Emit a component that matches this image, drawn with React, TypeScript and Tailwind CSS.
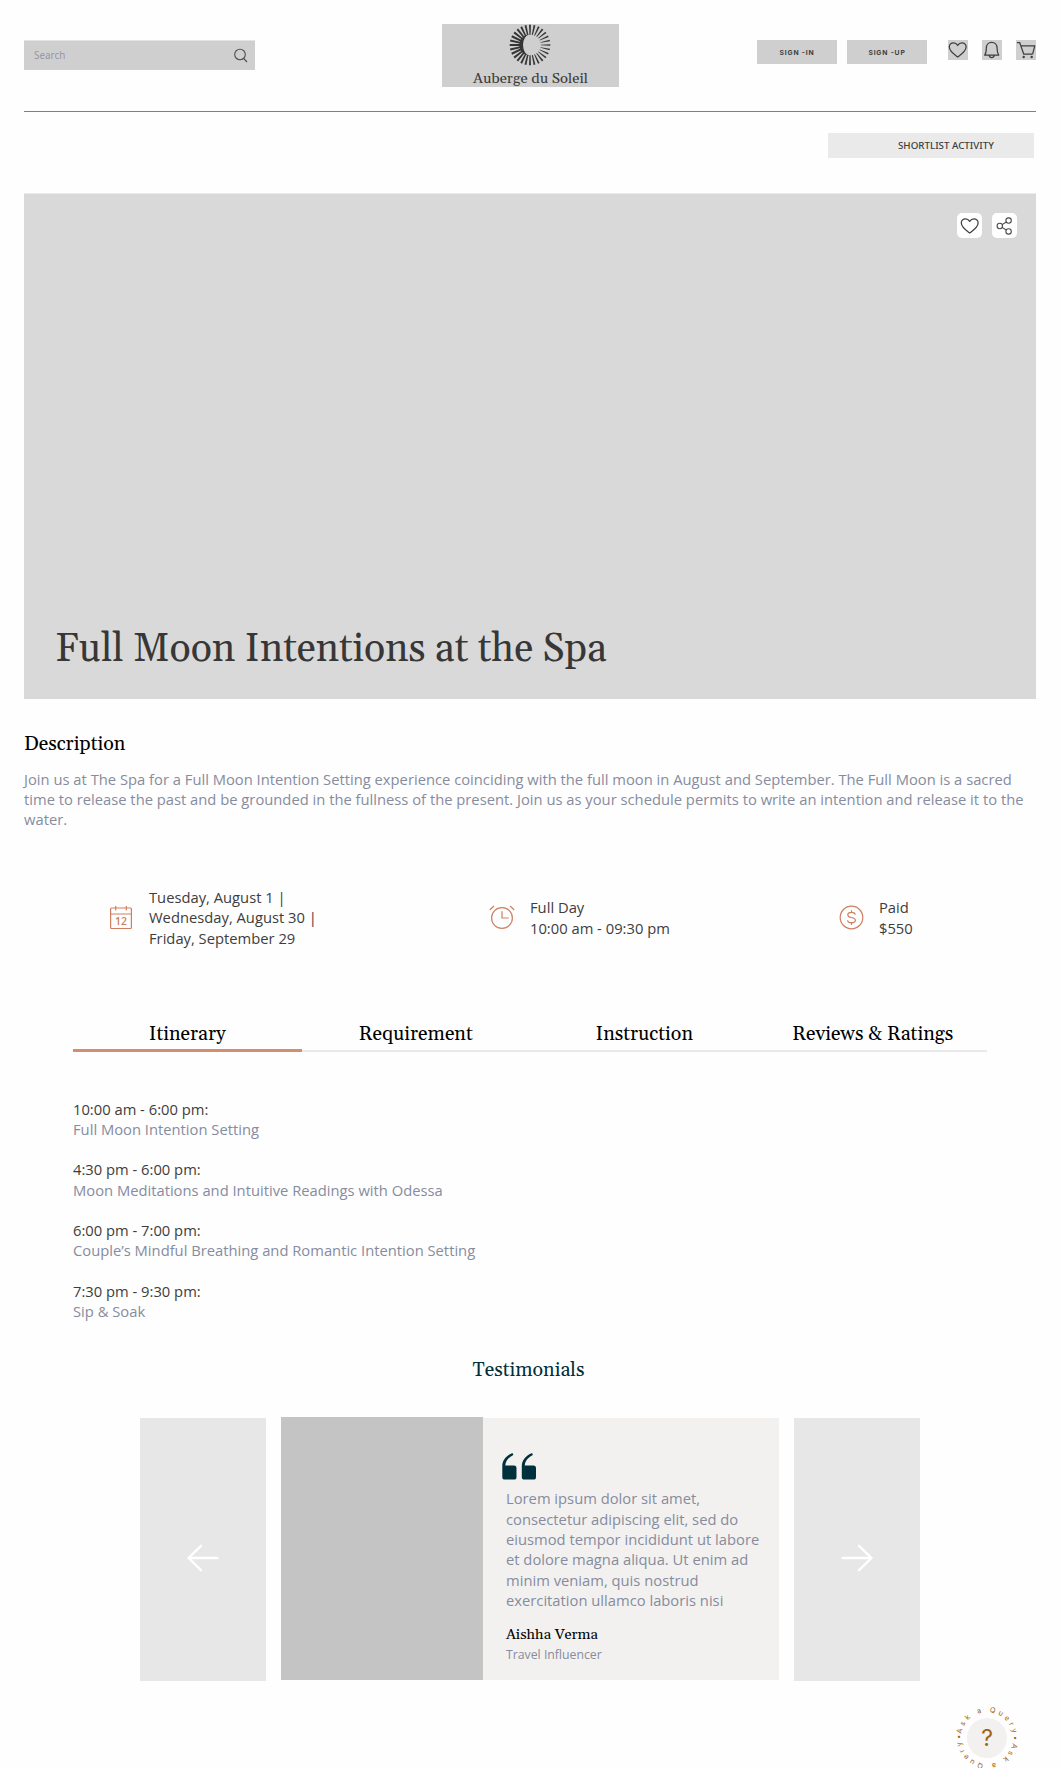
import React from "react";

const serif = "font-[Georgia,Gelasio,'Liberation_Serif',serif]";

function Heart({ className }: { className: string }) {
  return (
    <svg viewBox="0 0 20 20" className={className} fill="none" stroke="#3f3f3f" strokeWidth="1.25" strokeLinejoin="round">
      <path d="M9.700 17.100C7.300 15.300 1.300 11.400 1.300 7.100c0-2.500 1.900-4.200 4.100-4.200 1.900 0 3.400 1 4.300 2.600.9-1.600 2.400-2.600 4.300-2.600 2.200 0 4.100 1.700 4.100 4.200 0 4.300-6 8.200-8.400 10z" />
    </svg>
  );
}

function Sun() {
  const rays = Array.from({ length: 28 }, (_, i) => (i * 360) / 28);
  return (
    <svg viewBox="-21 -21 42 42" className="-ml-px size-[42px] shrink-0 overflow-visible" fill="#353535">
      {rays.map((a) => {
        const left = (1 - Math.sin((a * Math.PI) / 180)) / 2;
        const inner = 10.8 - left * 1.2;
        const half = 0.25 + left * 0.7;
        return (
          <polygon
            key={a}
            transform={`rotate(${a})`}
            points={`${-half},${-inner} ${half},${-inner} ${0.85 + left * 0.2},-20.3 ${-0.85 - left * 0.2},-20.3`}
          />
        );
      })}
      <path d="M0-10.700A10.700 10.700 0 0 0 0 10.700A7 10.700 0 0 1 0-10.700z" />
    </svg>
  );
}

function Header() {
  return (
    <header className="mx-6 flex h-[112px] items-start justify-between border-b border-[#808080] pt-6">
      <div className="mt-4 flex h-[30px] w-[231px] items-center justify-between border-t border-[#e4e4e4] bg-[#cfcfcf] pr-[7px] pl-[10px]">
        <span className="font-['Noto_Sans',sans-serif] text-[9.900px] text-[#9696a6]">Search</span>
        <svg viewBox="0 0 15 15" className="size-[15px]" fill="none" stroke="#505050" strokeWidth="1.100">
          <circle cx="7" cy="6.500" r="5.300" />
          <path d="M10.700 10.500 14 14" />
        </svg>
      </div>
      <div className="ml-[187px] flex h-[63px] w-[177px] flex-col items-center bg-[#cfcfcf]">
        <Sun />
        <span className={`${serif} mt-[1px] text-[14.800px] leading-[24px] whitespace-nowrap text-[#3b3b3b]`}>Auberge du Soleil</span>
      </div>
      <div className="mt-4 ml-[138px] flex items-start">
        {["SIGN -IN", "SIGN -UP"].map((label) => (
          <button key={label} className="mr-[10px] flex h-6 w-20 items-center justify-center bg-[#cfcfcf] pt-[3px] font-[Inter,sans-serif] text-[6.800px] font-bold tracking-[0.800px] whitespace-nowrap text-[#404040]">
            {label}
          </button>
        ))}
        <div className="ml-[11px] flex gap-[14px]">
          <span className="size-5 bg-[#cfcfcf]"><Heart className="size-5" /></span>
          <span className="size-5 bg-[#cfcfcf]">
            <svg viewBox="0 0 20 20" className="size-5" fill="none" stroke="#3f3f3f" strokeWidth="1.250" strokeLinejoin="round">
              <path d="M2.700 15.200C4.300 13.200 4.300 12 4.300 8.300c0-3.500 2.300-5.900 5.400-5.900s5.400 2.400 5.400 5.900c0 3.700.2 4.900 1.600 6.900zM7.200 15.400c.2 1.400 1.200 2.100 2.500 2.100s2.300-.7 2.500-2.100" />
            </svg>
          </span>
          <span className="size-5 bg-[#cfcfcf]">
            <svg viewBox="0 0 20 20" className="size-5" fill="none" stroke="#3f3f3f" strokeWidth="1.250" strokeLinejoin="round">
              <path d="M1 2.500h2.700l4.100 11.700h8.800M4.900 5.800h13.900l-2.200 8.400" />
              <circle cx="7.700" cy="17" r="1.200" fill="#3f3f3f" stroke="none" />
              <circle cx="15.700" cy="17" r="1.200" fill="#3f3f3f" stroke="none" />
            </svg>
          </span>
        </div>
      </div>
    </header>
  );
}

function Calendar() {
  return (
    <svg viewBox="0 0 24 25" className="h-[25px] w-6" fill="none" stroke="#cf7f61" strokeWidth="1.200">
      <rect x="1.600" y="3" width="20.800" height="20.500" rx="1" />
      <path d="M1.600 9h20.800M6.700 1v4.500M17.300 1v4.500" />
      <text x="12" y="20.300" textAnchor="middle" className="font-['Open_Sans',sans-serif] text-[10.500px] font-semibold" fill="#cf7f61" stroke="none">12</text>
    </svg>
  );
}

function Clock() {
  return (
    <svg viewBox="0 0 26 25" className="h-[25px] w-[26px]" fill="none" stroke="#cf7f61" strokeWidth="1.200" strokeLinecap="round">
      <circle cx="13" cy="13" r="10.400" />
      <path d="M13 6.700V13h6.200M1.200 4.500 4.700 1.300M21.300 1.300l3.500 3.200" />
    </svg>
  );
}

function Dollar() {
  return (
    <svg viewBox="0 0 25 25" className="size-[25px]" fill="none" stroke="#cf7f61" strokeWidth="1.200">
      <circle cx="12.500" cy="12.500" r="11.300" />
      <path d="M16.200 9.700c0-1.500-1.300-2.300-3.700-2.300s-3.700 1-3.700 2.500 1.200 2.100 3.700 2.600 3.900 1.100 3.900 2.700-1.400 2.500-3.900 2.500-3.900-1-3.900-2.500M12.500 5.200v2.200M12.500 17.700v2.200" />
    </svg>
  );
}

const schedule = [
  ["10:00 am - 6:00 pm:", "Full Moon Intention Setting"],
  ["4:30 pm - 6:00 pm:", "Moon Meditations and Intuitive Readings with Odessa"],
  ["6:00 pm - 7:00 pm:", "Couple’s Mindful Breathing and Romantic Intention Setting"],
  ["7:30 pm - 9:30 pm:", "Sip & Soak"],
];

function Arrow({ flip }: { flip?: boolean }) {
  return (
    <svg viewBox="0 0 32 28" className={flip ? "h-7 w-8 -scale-x-100" : "h-7 w-8"} fill="none" stroke="#fff" strokeWidth="2.400" strokeLinecap="round" strokeLinejoin="round">
      <path d="M30.500 14H1.500M14 1.800 1.500 14 14 26.200" />
    </svg>
  );
}

function Testimonials() {
  return (
    <section className="mt-[38px]">
      <h2 className={`${serif} pr-[3px] text-center text-[19.650px] leading-6 text-[#00303c]`}>Testimonials</h2>
      <div className="mx-[140px] mt-[34px] flex justify-between">
        <button className="mt-px flex h-[263px] w-[126px] items-center justify-center bg-[#e7e7e7] pt-[17px]"><Arrow /></button>
        <article className="flex h-[263px] w-[498px]">
          <div className="h-full w-[202px] bg-[#c4c4c4]" />
          <div className="mt-px h-[262px] flex-1 bg-[#f2f1ef] pt-[35px] pl-[23px]">
            <svg viewBox="0 0 34 27" className="-ml-[4px] h-[27px] w-[34px]" fill="#00303c">
              {[0, 19.500].map((x) => (
                <path key={x} transform={`translate(${x})`} d="M10 .3C4.200 2.800.300 7.500.300 13v10.900c0 1.800.9 2.700 2.700 2.700h9c1.700 0 2.500-.9 2.500-2.700v-8.800c0-1.800-.8-2.700-2.500-2.700H3.300c.3-4.500 3-7.700 7.600-10.200.8-.4 0-2.300-.9-1.900z" />
              ))}
            </svg>
            <p className="mt-[7.900px] text-[14.750px] leading-[20.300px] whitespace-nowrap text-[#868c9e]">
              Lorem ipsum dolor sit amet,<br />
              consectetur adipiscing elit, sed do<br />
              eiusmod tempor incididunt ut labore<br />
              et dolore magna aliqua. Ut enim ad<br />
              minim veniam, quis nostrud<br />
              exercitation ullamco laboris nisi
            </p>
            <div className={`${serif} mt-[15.600px] text-[14.730px] leading-[18px] text-black`}>Aishha Verma</div>
            <div className="mt-[3px] text-[12.280px] leading-4 text-[#868c9e]">Travel Influencer</div>
          </div>
        </article>
        <button className="mt-px flex h-[263px] w-[126px] items-center justify-center bg-[#e7e7e7] pt-[17px]"><Arrow flip /></button>
      </div>
    </section>
  );
}

function QueryBadge() {
  return (
    <svg viewBox="-36 -36 72 72" className="absolute top-[1702px] left-[951px] size-[72px]">
      <circle r="20" fill="#f2f1ef" />
      <defs>
        <path id="ring" d="M-26 0A26 26 0 0 1 26 0A26 26 0 0 1-26 0A26 26 0 0 1 26 0" />
      </defs>
      <text className="font-[Inter,sans-serif] text-[7.300px]" fill="#a1630f">
        <textPath href="#ring" startOffset="4" textLength="161.500">Ask a Query•Ask a Query•</textPath>
      </text>
      <text y="8.200" textAnchor="middle" className="font-[Inter,sans-serif] text-[23px]" fill="#a1630f">?</text>
    </svg>
  );
}

export default function App() {
  return (
    <div className="relative h-[1768px] w-[1060px] overflow-hidden bg-[#fefefe] font-['Open_Sans',sans-serif]">
      <Header />
      <div className="mt-[21px] flex justify-end pr-[26px]">
        <button className="flex h-[25px] w-[206px] items-center bg-[#eaeaea] pt-px pl-[70px] font-['Noto_Sans',sans-serif] text-[9.750px] font-medium whitespace-nowrap text-[#3d3d3d]">
          SHORTLIST ACTIVITY
        </button>
      </div>
      <section className="mx-6 mt-[35px] flex h-[506px] flex-col justify-between border-t border-[#ebebeb] bg-[#d9d9d9] pt-[19px] pr-[19px] pl-[31px]">
        <div className="flex justify-end gap-[10px]">
          <span className="flex size-[25px] items-center justify-center rounded-[5px] bg-white"><Heart className="size-5" /></span>
          <span className="flex size-[25px] items-center justify-center rounded-[5px] bg-white">
            <svg viewBox="0 0 17 18" className="-ml-px h-[18px] w-[17px]" fill="none" stroke="#4b4b4b" strokeWidth="1.100">
              <circle cx="3.800" cy="9" r="2.700" />
              <circle cx="12.600" cy="3.600" r="2.700" />
              <circle cx="12.600" cy="14.400" r="2.700" />
              <path d="m6.100 7.600 4.200-2.600M6.100 10.400l4.200 2.600" />
            </svg>
          </span>
        </div>
        <h1 className={`${serif} mb-[25px] text-[39.300px] leading-[48px] whitespace-nowrap text-[#373737]`}>Full Moon Intentions at the Spa</h1>
      </section>
      <section className="mx-6 mt-[34px]">
        <h2 className={`${serif} text-[19.650px] leading-6 text-black`}>Description</h2>
        <p className="mt-[11.500px] text-[14.750px] leading-[20.400px] whitespace-nowrap text-[#868c9e]">
          Join us at The Spa for a Full Moon Intention Setting experience coinciding with the full moon in August and September. The Full Moon is a sacred<br />
          time to release the past and be grounded in the fullness of the present. Join us as your schedule permits to write an intention and release it to the<br />
          water.
        </p>
      </section>
      <section className="mt-[56.800px] flex h-[62px] items-center pl-[109px] text-[14.750px] leading-[20.300px] whitespace-nowrap text-[#3d3d3d]">
        <div className="flex w-[380px] items-center gap-[16px]">
          <Calendar />
          <p>Tuesday, August 1 |<br />Wednesday, August 30 |<br />Friday, September 29</p>
        </div>
        <div className="flex w-[350px] items-center gap-[15px]">
          <Clock />
          <p>Full Day<br />10:00 am - 09:30 pm</p>
        </div>
        <div className="flex items-center gap-[15px]">
          <Dollar />
          <p>Paid<br />$550</p>
        </div>
      </section>
      <nav className="mx-[73px] mt-[74px] grid grid-cols-4">
        {["Itinerary", "Requirement", "Instruction", "Reviews & Ratings"].map((tab, i) => (
          <a key={tab} className={`${serif} flex h-[30px] flex-col text-center text-[19.650px] leading-6 text-black`}>
            <span className="h-[26.500px] shrink-0">{tab}</span>
            {i === 0 ? <span className="h-[3px] shrink-0 bg-[#d38d70]" /> : <span className="mt-px h-[2px] shrink-0 bg-[#e9e9e9]" />}
          </a>
        ))}
      </nav>
      <section className="mx-[73px] mt-[46px] flex flex-col gap-[20.200px] text-[14.750px] leading-[20.300px]">
        {schedule.map(([time, title]) => (
          <div key={time}>
            <div className="text-[#3d3d3d]">{time}</div>
            <div className="text-[#868c9e]">{title}</div>
          </div>
        ))}
      </section>
      <Testimonials />
      <QueryBadge />
    </div>
  );
}
